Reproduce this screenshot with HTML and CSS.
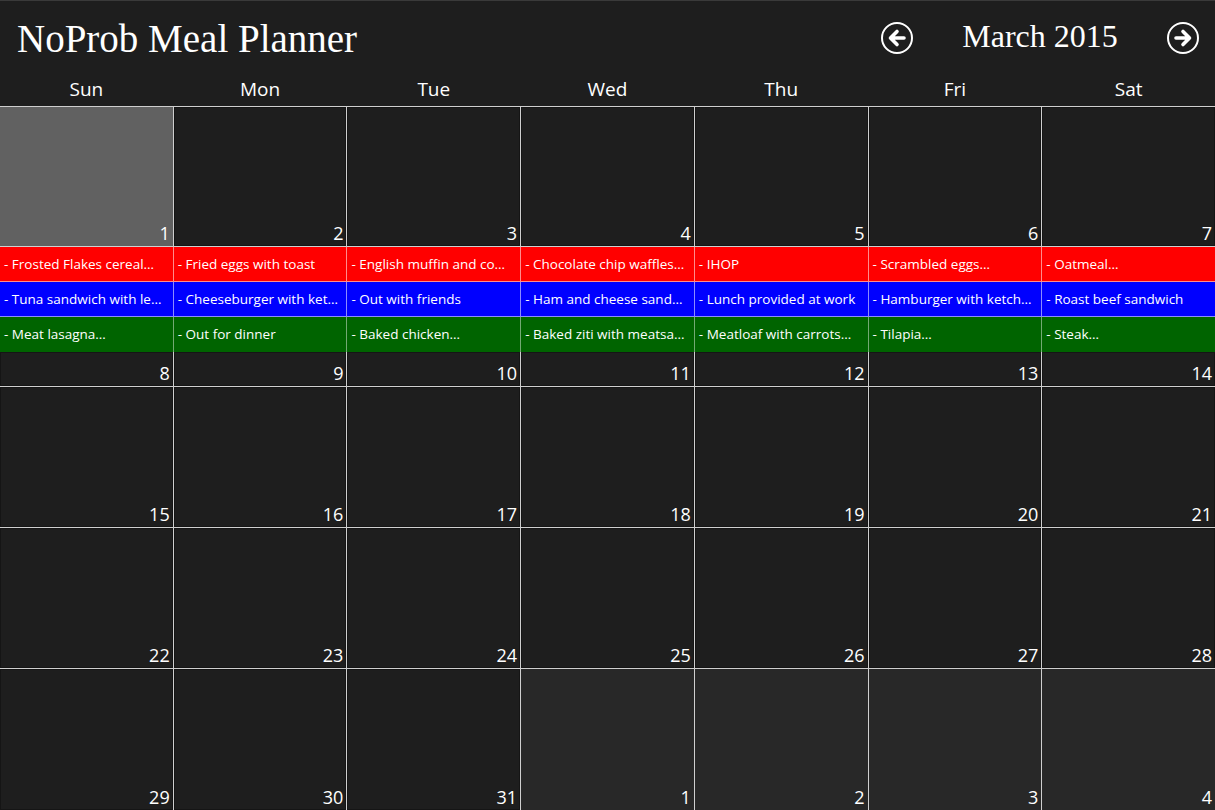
FILE: index.html
```html
<!DOCTYPE html>
<html>
<head>
<meta charset="utf-8">
<title>NoProb Meal Planner</title>
<link rel="stylesheet" href="styles.css">
</head>
<body>
<div class="app">
  <header class="top">
    <h1 class="title">NoProb Meal Planner</h1>
    <nav class="nav">
      <button class="arrow" aria-label="Previous month">
        <svg width="32" height="32" viewBox="0 0 32 32"><circle cx="16" cy="16" r="15" fill="none" stroke="#fff" stroke-width="2"/><path d="M16 9.5 L9.5 16 L16 22.5 M10 16 H23" fill="none" stroke="#fff" stroke-width="3.6" stroke-linecap="round" stroke-linejoin="round"/></svg>
      </button>
      <span class="month">March 2015</span>
      <button class="arrow" aria-label="Next month">
        <svg width="32" height="32" viewBox="0 0 32 32"><circle cx="16" cy="16" r="15" fill="none" stroke="#fff" stroke-width="2"/><path d="M16 9.5 L22.5 16 L16 22.5 M22 16 H9" fill="none" stroke="#fff" stroke-width="3.6" stroke-linecap="round" stroke-linejoin="round"/></svg>
      </button>
    </nav>
  </header>

  <div class="dow">
    <div>Sun</div><div>Mon</div><div>Tue</div><div>Wed</div><div>Thu</div><div>Fri</div><div>Sat</div>
  </div>

  <div class="week w1">
    <div class="day today"><span>1</span></div>
    <div class="day"><span>2</span></div>
    <div class="day"><span>3</span></div>
    <div class="day"><span>4</span></div>
    <div class="day"><span>5</span></div>
    <div class="day"><span>6</span></div>
    <div class="day"><span>7</span></div>
  </div>

  <div class="meals">
    <div class="strip breakfast">
      <div class="meal">- Frosted Flakes cereal…</div>
      <div class="meal">- Fried eggs with toast</div>
      <div class="meal">- English muffin and co…</div>
      <div class="meal">- Chocolate chip waffles…</div>
      <div class="meal">- IHOP</div>
      <div class="meal">- Scrambled eggs…</div>
      <div class="meal">- Oatmeal…</div>
    </div>
    <div class="strip lunch">
      <div class="meal">- Tuna sandwich with le…</div>
      <div class="meal">- Cheeseburger with ket…</div>
      <div class="meal">- Out with friends</div>
      <div class="meal">- Ham and cheese sand…</div>
      <div class="meal">- Lunch provided at work</div>
      <div class="meal">- Hamburger with ketch…</div>
      <div class="meal">- Roast beef sandwich</div>
    </div>
    <div class="strip dinner">
      <div class="meal">- Meat lasagna…</div>
      <div class="meal">- Out for dinner</div>
      <div class="meal">- Baked chicken…</div>
      <div class="meal">- Baked ziti with meatsa…</div>
      <div class="meal">- Meatloaf with carrots…</div>
      <div class="meal">- Tilapia…</div>
      <div class="meal">- Steak…</div>
    </div>
  </div>

  <div class="week w2">
    <div class="day"><span>8</span></div>
    <div class="day"><span>9</span></div>
    <div class="day"><span>10</span></div>
    <div class="day"><span>11</span></div>
    <div class="day"><span>12</span></div>
    <div class="day"><span>13</span></div>
    <div class="day"><span>14</span></div>
  </div>

  <div class="week w3">
    <div class="day"><span>15</span></div>
    <div class="day"><span>16</span></div>
    <div class="day"><span>17</span></div>
    <div class="day"><span>18</span></div>
    <div class="day"><span>19</span></div>
    <div class="day"><span>20</span></div>
    <div class="day"><span>21</span></div>
  </div>

  <div class="week w4">
    <div class="day"><span>22</span></div>
    <div class="day"><span>23</span></div>
    <div class="day"><span>24</span></div>
    <div class="day"><span>25</span></div>
    <div class="day"><span>26</span></div>
    <div class="day"><span>27</span></div>
    <div class="day"><span>28</span></div>
  </div>

  <div class="week w5">
    <div class="day"><span>29</span></div>
    <div class="day"><span>30</span></div>
    <div class="day"><span>31</span></div>
    <div class="day other"><span>1</span></div>
    <div class="day other"><span>2</span></div>
    <div class="day other"><span>3</span></div>
    <div class="day other"><span>4</span></div>
  </div>
</div>
</body>
</html>
```

FILE: styles.css
```css
html, body {
  margin: 0;
  padding: 0;
  background: #1e1e1e;
}

.app {
  width: 1215px;
  height: 810px;
  overflow: hidden;
  background: #1e1e1e;
  color: #fff;
  font-family: "Open Sans", "Noto Sans", sans-serif;
}

.top {
  height: 72px;
  display: flex;
  justify-content: space-between;
  align-items: flex-start;
  box-shadow: inset 0 1px 0 #3a3a3a;
}

.title {
  margin: 0;
  padding: 19px 0 0 17px;
  font-family: "Liberation Serif", "Times New Roman", serif;
  font-weight: normal;
  font-size: 39px;
  line-height: 39px;
  color: #fff;
}

.nav {
  display: flex;
  align-items: center;
  margin-top: 20px;
  margin-right: 16px;
}

.arrow {
  width: 32px;
  height: 32px;
  padding: 0;
  border: 0;
  background: none;
  display: block;
}
.arrow svg { display: block; }

.month {
  width: 254px;
  text-align: center;
  font-family: "Liberation Serif", "Times New Roman", serif;
  font-size: 32px;
  line-height: 32px;
  margin-bottom: 3px;
}

.dow {
  height: 34px;
  display: grid;
  grid-template-columns: repeat(7, 1fr);
  column-gap: 1px;
  font-size: 19px;
  line-height: 34px;
  text-align: center;
}

.week {
  display: grid;
  grid-template-columns: repeat(7, 1fr);
  column-gap: 1px;
  background: #cfcfcf;
  border-top: 1px solid #cfcfcf;
}

.w1 { height: 139px; }
.w2 { height: 34px; border-top: 0; }
.w3 { height: 140px; }
.w4 { height: 140px; }
.w5 { height: 141px; }

.day {
  background: #1e1e1e;
  box-shadow: inset 0 0 0 1px #151515;
  display: flex;
  justify-content: flex-end;
  align-items: flex-end;
  padding: 0 3px 4px 0;
  font-size: 18px;
  line-height: 18px;
}

.day.today {
  background: #616161;
  box-shadow: none;
}

.day.other {
  background: #282828;
  box-shadow: none;
}

.meals {
  border-top: 1px solid #cfcfcf;
}

.strip {
  display: grid;
  grid-template-columns: repeat(7, 1fr);
  column-gap: 1px;
  height: 34px;
  border-bottom: 1px solid transparent;
}

.strip.breakfast {
  background: linear-gradient(rgba(255,255,255,0.55), rgba(255,255,255,0.55)), #ff0000;
}
.strip.lunch {
  background: linear-gradient(rgba(255,255,255,0.55), rgba(255,255,255,0.55)), #0000ff;
}
.strip.dinner {
  height: 35px;
  border-bottom: 0;
  background: linear-gradient(rgba(255,255,255,0.45), rgba(255,255,255,0.45)), #006400;
}

.breakfast .meal { background: #ff0000; }
.lunch .meal { background: #0000ff; }
.dinner .meal { background: #006400; }

.meal {
  padding-left: 4px;
  font-size: 13.5px;
  line-height: 34px;
  white-space: nowrap;
  overflow: hidden;
  color: #fff;
}
.dinner .meal { line-height: 35px; }
```
